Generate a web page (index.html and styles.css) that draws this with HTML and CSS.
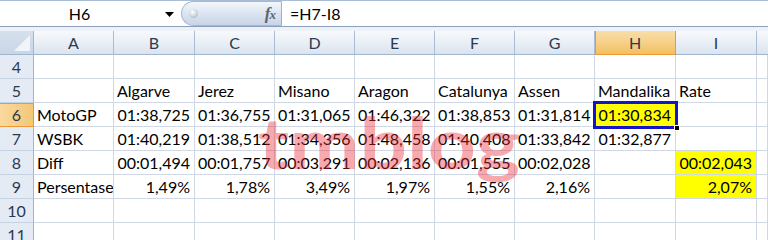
FILE: index.html
```html
<!DOCTYPE html>
<html>
<head>
<meta charset="utf-8">
<link rel="stylesheet" href="styles.css">
</head>
<body>
<div class="app">
  <div class="fbar">
    <div class="namebox">
      <span class="name">H6</span>
      <svg class="arrow" width="9" height="5" viewBox="0 0 9 5"><path d="M0 0H9L4.5 5Z" fill="#000"/></svg>
    </div>
    <div class="pill">
      <span class="knob"></span>
      <span class="fx"><i>f</i><i class="x">x</i></span>
    </div>
    <div class="formula">=H7-I8</div>
  </div>
  <div class="strip"></div>
  <div class="sheet">
    <div class="c corner"><span class="tri"></span></div>
    <div class="c ch">A</div><div class="c ch">B</div><div class="c ch">C</div><div class="c ch">D</div><div class="c ch">E</div><div class="c ch">F</div><div class="c ch">G</div><div class="c ch sel">H</div><div class="c ch">I</div><div class="c ch last"></div>

    <div class="c rh">4</div>
    <div class="c"></div><div class="c"></div><div class="c"></div><div class="c"></div><div class="c"></div><div class="c"></div><div class="c"></div><div class="c"></div><div class="c"></div><div class="c"></div>

    <div class="c rh">5</div>
    <div class="c"></div><div class="c">Algarve</div><div class="c">Jerez</div><div class="c">Misano</div><div class="c">Aragon</div><div class="c">Catalunya</div><div class="c">Assen</div><div class="c">Mandalika</div><div class="c">Rate</div><div class="c"></div>

    <div class="c rh sel">6</div>
    <div class="c">MotoGP</div><div class="c n">01:38,725</div><div class="c n">01:36,755</div><div class="c n">01:31,065</div><div class="c n">01:46,322</div><div class="c n">01:38,853</div><div class="c n">01:31,814</div><div class="c n yl active">01:30,834<span class="selbox"></span><span class="handle"></span></div><div class="c"></div><div class="c"></div>

    <div class="c rh">7</div>
    <div class="c">WSBK</div><div class="c n">01:40,219</div><div class="c n">01:38,512</div><div class="c n">01:34,356</div><div class="c n">01:48,458</div><div class="c n">01:40,408</div><div class="c n">01:33,842</div><div class="c n">01:32,877</div><div class="c"></div><div class="c"></div>

    <div class="c rh">8</div>
    <div class="c">Diff</div><div class="c n">00:01,494</div><div class="c n">00:01,757</div><div class="c n">00:03,291</div><div class="c n">00:02,136</div><div class="c n">00:01,555</div><div class="c n">00:02,028</div><div class="c"></div><div class="c n yl">00:02,043</div><div class="c"></div>

    <div class="c rh">9</div>
    <div class="c">Persentase</div><div class="c n">1,49%</div><div class="c n">1,78%</div><div class="c n">3,49%</div><div class="c n">1,97%</div><div class="c n">1,55%</div><div class="c n">2,16%</div><div class="c"></div><div class="c n yl">2,07%</div><div class="c"></div>

    <div class="c rh">10</div>
    <div class="c"></div><div class="c"></div><div class="c"></div><div class="c"></div><div class="c"></div><div class="c"></div><div class="c"></div><div class="c"></div><div class="c"></div><div class="c"></div>

    <div class="c rh">11</div>
    <div class="c"></div><div class="c"></div><div class="c"></div><div class="c"></div><div class="c"></div><div class="c"></div><div class="c"></div><div class="c"></div><div class="c"></div><div class="c"></div>

    <svg class="watermark" width="280" height="160" viewBox="0 0 280 160"><text x="2" y="138" textLength="262" lengthAdjust="spacingAndGlyphs">tmblog</text></svg>
  </div>
</div>
</body>
</html>
```

FILE: styles.css
```css
* { box-sizing: border-box; }
html, body { margin: 0; padding: 0; background: #fff; overflow: hidden; }
body { width: 768px; height: 240px; font-family: Lato, "Open Sans", sans-serif; font-size: 16px; color: #000; }

.app { width: 768px; height: 240px; overflow: hidden; }

.fbar {
  height: 27px;
  display: flex;
  border-top: 1px solid #a9bdd6;
  border-bottom: 1px solid #8aa0be;
  background: #fff;
}
.namebox {
  width: 181px;
  display: flex;
  align-items: center;
}
.name { flex: 1; text-align: center; line-height: 25px; padding-right: 6px; }
.arrow { margin-right: 7px; margin-top: 1px; }

.pill {
  width: 101px;
  height: 25px;
  border-radius: 13px 0 0 13px;
  border: 1px solid #a6b8cf;
  border-right: 1px solid #9cb0c8;
  background: linear-gradient(#f4f7fb 0%, #dde6f2 45%, #c8d5e7 100%);
  display: flex;
  align-items: center;
  justify-content: space-between;
  padding: 0 6px 0 7px;
}
.knob {
  width: 9px; height: 9px; border-radius: 50%;
  background: radial-gradient(circle at 40% 35%, #ffffff 0%, #d4dbe4 45%, #9aa6b5 100%);
}
.fx { font-family: "Liberation Serif", serif; color: #5f646b; font-size: 17px; font-weight: 700; line-height: 25px; letter-spacing: -1px; }
.fx .x { font-size: 13px; }

.formula { flex: 1; padding-left: 8px; line-height: 25px; }

.strip { height: 4px; background: #eef2f7; }

.sheet {
  position: relative;
  display: grid;
  grid-template-columns: 34px 80px 81px 80px 80px 80px 80px 80px 81px 81px 1fr;
  grid-auto-rows: 24px;
}
.c {
  border-right: 1px solid #d0d7e5;
  border-bottom: 1px solid #d0d7e5;
  padding: 0 3px;
  line-height: 23px;
  white-space: nowrap;
  overflow: hidden;
  position: relative;
}
.c.n { text-align: right; padding-right: 4px; }
.c.yl { background: #ffff00; }
.c.active { overflow: visible; z-index: 2; }
.selbox {
  position: absolute;
  left: -2px; top: -2px; right: -3px; bottom: -3px;
  border: 3px solid #1414c8;
}
.handle {
  position: absolute;
  right: -5px; bottom: -5px;
  width: 6px; height: 6px;
  background: #000;
  border: 1px solid #fff;
}

.ch {
  background: linear-gradient(#f7f9fc 0%, #eaeff6 50%, #dbe3ee 100%);
  border-right-color: #a9bcd4;
  border-bottom-color: #9eb6ce;
  text-align: center;
  color: #2a3a4f;
}
.ch.last { border-right: 0; }
.ch.sel {
  background: linear-gradient(#f9dea8 0%, #f6d089 50%, #f1c15f 100%);
  border-right-color: #f29536;
  border-bottom-color: #f29536;
  box-shadow: inset 1px 0 0 #f29536;
}
.corner {
  background: linear-gradient(#d6e0ec, #c9d6e6);
  border-right-color: #9eb6ce;
  border-bottom-color: #9eb6ce;
}
.tri {
  position: absolute;
  right: 3px; bottom: 3px;
  width: 0; height: 0;
  border-left: 16px solid transparent;
  border-bottom: 16px solid #f1f4f8;
}
.rh {
  background: #e4ebf5;
  border-right-color: #9eb6ce;
  border-bottom-color: #c5d2e2;
  text-align: center;
  color: #2a3a4f;
  padding: 0;
}
.rh.sel {
  background: linear-gradient(90deg, #f9d9a0, #f3c776);
  border-right-color: #f29536;
  border-bottom-color: #f29536;
  box-shadow: inset 0 1px 0 #f29536;
}

.watermark {
  position: absolute;
  left: 256px;
  top: 0;
  z-index: 1;
  pointer-events: none;
  font-family: Lato, sans-serif;
  font-weight: 700;
  font-size: 70px;
  fill: rgba(235, 40, 50, 0.4);
}
```
